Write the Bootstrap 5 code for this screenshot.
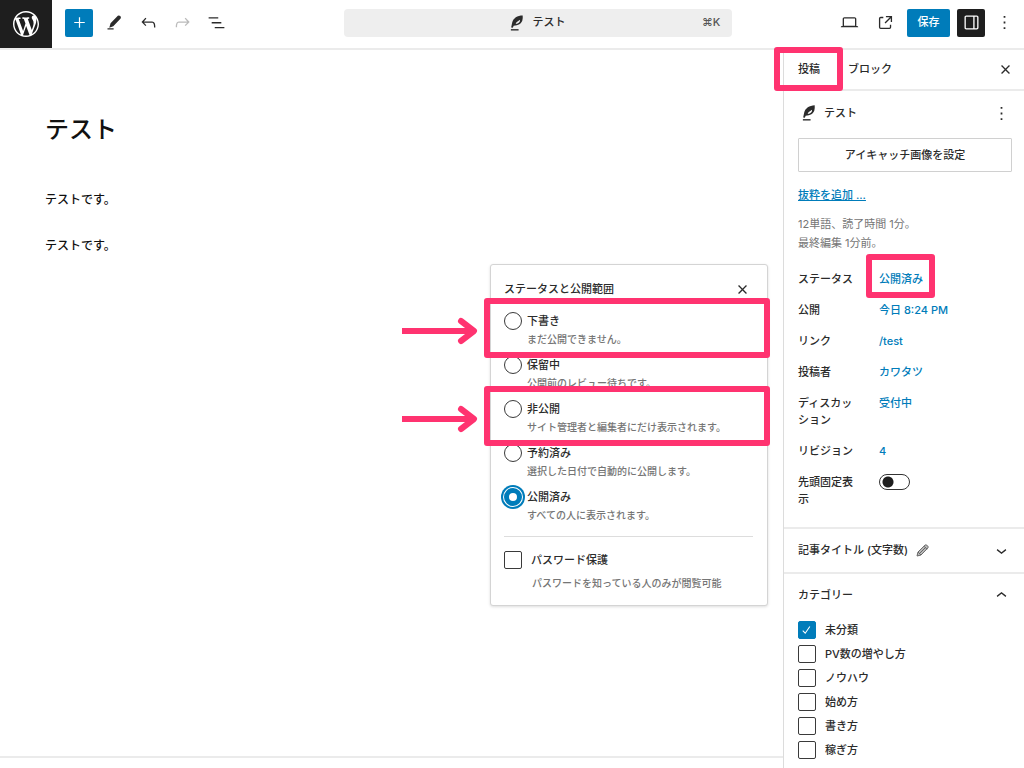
<!DOCTYPE html>
<html lang="ja">
<head>
<meta charset="utf-8">
<meta name="viewport" content="width=device-width, initial-scale=1">
<title>テスト</title>
<link href="https://cdn.jsdelivr.net/npm/bootstrap@5.3.0/dist/css/bootstrap.min.css" rel="stylesheet">
<style>
:root { --ink: #2b2b2b; --blue: #007cba; --line: #ebebeb; --pink: #ff3370; --gray: #757575; }
body { font: 500 11px/17px Inter, "Noto Sans CJK JP", sans-serif; color: var(--ink); background: #fff; }
button, input, label { font: inherit; color: inherit; }
svg { display: block; fill: currentColor; }
.ico { width: 21px; height: 21px; flex: none; }
.plain { border: 0; background: none; padding: 0; display: flex; align-items: center; justify-content: center; }
a, .linky { color: var(--blue); }
.linky { text-decoration: none; }

.topbar { height: 50px; border-bottom: 2px solid var(--line); }
.wp-logo { width: 52px; height: 48px; background: #1e1e1e; color: #fff; flex: none; }
.tools { display: grid; grid-template-columns: 1fr 40% 1fr; align-items: center; height: 45px; }
.sq { width: 28px; height: 28px; border-radius: 2px; }
.blue-btn { background: var(--blue); color: #fff; border-radius: 2px; height: 28px; }
.save { width: 43px; }
.dark-btn { background: #1e1e1e; color: #fff; }
.left-tools { padding-left: 13px; }
.tool { width: 34px; }
.redo { color: #bbb; }
.right-tools { gap: 7px; padding-right: 7px; }
.more { width: 25px; }
.search { height: 28px; background: #eee; border-radius: 4px; }
.search .kbd-hint { position: absolute; right: 12px; color: #555; }

.canvas { color: #111; }
.doc { padding: 58px 45px; }
.doc h1 { font: 500 24px/44px Inter, "Noto Sans CJK JP", sans-serif; margin: 0 0 38px; }
.doc p { font-size: 12px; line-height: 20px; margin: 0 0 26px; }
.foot { height: 12px; border-top: 2px solid var(--line); }

.side { width: 241px; border-left: 1px solid #dcdcdc; flex: none; }
.tabs { height: 41px; border-bottom: 2px solid var(--line); padding: 0 8px 0 14px; }
.tabs .plain { height: 39px; }
.summary { padding: 10px 12px 19px 14px; }
.summary .head { height: 24px; margin-bottom: 13px; }
.thumb-btn { height: 34px; border: 1px solid #d0d0d0; border-radius: 1px; background: #fff; margin-bottom: 15px; }
.meta { color: var(--gray); line-height: 19px; font-weight: 400; margin: 11px 0 18px; }
.rows { display: grid; gap: 14px; margin: 0; }
.rows dt, .rows dd { font-weight: inherit; margin: 0; }
.rows dt { width: 60px; }
.pair { display: flex; gap: 21px; }
.panel-head { height: 45px; border-top: 2px solid var(--line); padding: 0 12px 0 14px; width: 100%; }
.cats { padding: 4px 14px 7px; gap: 6px; }
.tick-row { display: flex; gap: 9px; }
.tick-row label { line-height: 18px; }

input.tick, input.dot { appearance: none; width: 18px; height: 18px; border: 1px solid #3a3a3a; background: #fff; margin: 0; flex: none; }
input.tick { border-radius: 2px; }
input.dot { border-radius: 50%; }
input.tick:checked { border-color: var(--blue); background: var(--blue) url("data:image/svg+xml,%3Csvg xmlns='http://www.w3.org/2000/svg' viewBox='0 0 18 18'%3E%3Cpath d='M4.2 9.8l2.8 2.8 5.200-7.600' fill='none' stroke='white' stroke-width='1.200'/%3E%3C/svg%3E"); }
input.dot:checked { border: 5px solid var(--blue); box-shadow: 0 0 0 1px #fff, 0 0 0 3px var(--blue); }
input.switch { appearance: none; display: block; width: 31px; height: 16px; margin: 0; border: 1px solid #333; border-radius: 8px; background: radial-gradient(circle at 8px 7px, #1e1e1e 5px, #fff 6px); }

.pop { position: absolute; top: 214px; right: 256px; width: 278px; border: 1px solid #d4d4d4; border-radius: 3px; background: #fff; box-shadow: 0 1px 3px #0002; padding: 13px 14px 13px 13px; }
.pop .head { height: 22px; margin-bottom: 12px; }
.pop h2 { font: inherit; margin: 0; }
.opts { display: grid; gap: 8px; }
.opt { position: relative; display: flex; gap: 5px; }
.opt label, .hint { line-height: 18px; display: block; }
.hint { color: var(--gray); font-size: 10px; }
.pw { border-top: 1px solid #ddd; margin-top: 12px; padding-top: 14px; }
.pw .hint { margin: 5px 0 0 28px; }

/* Pink emphasis frames laid over the controls */
.frame { position: absolute; border: 6px solid var(--pink); border-radius: 3px; z-index: 2; pointer-events: none; }
.opt .frame { inset: -14px -17px -10px -20px; }
.tab-frame { inset: -3px -23px -2px -24px; }
.status-frame { inset: -17px -12px -10px -13px; }
.arrow { position: absolute; right: 100%; top: 50%; width: 82px; height: 32px; margin: -13px 8px 0 0; fill: none; stroke: var(--pink); stroke-width: 6; }
</style>
</head>
<body>
<svg width="0" height="0" class="position-absolute" aria-hidden="true">
  <symbol id="feather" viewBox="0 0 16 20"><path d="M14.500 1C8.500 1.300 3.600 4.400 2.600 9.200l-1.300 6 1.900.3 1-2.500c5.200 0 8.900-2.200 9.900-5.800.5-2 .6-4.200.4-6.200zM11.500 6.300c.4 2.300-1.600 4.300-5 4.800 0-1.900 2.900-3 5-4.800z" fill-rule="evenodd"/><path d="M1 17h8.800v1.600H1z"/></symbol>
  <symbol id="dots" viewBox="0 0 24 24"><path d="M13 19.500h-2v-2.200h2zm0-6.400h-2v-2.200h2zm0-6.400h-2V4.500h2z"/></symbol>
  <symbol id="cross" viewBox="0 0 24 24"><path d="M12 13.060l4 4 1.060-1.060-4-4 4-4L16 6.940l-4 4-4-4L6.940 8l4 4-4 4L8 17.060z"/></symbol>
</svg>
<div class="d-flex flex-column min-vh-100">
<header class="topbar d-flex">
  <a href="#" class="wp-logo d-flex align-items-center justify-content-center" aria-label="WordPress"><svg width="26" height="26" viewBox="0 0 20 20"><path d="M20 10c0-5.510-4.490-10-10-10C4.480 0 0 4.490 0 10c0 5.520 4.480 10 10 10 5.510 0 10-4.480 10-10zM7.780 15.370L4.370 6.220c.55-.02 1.170-.08 1.170-.08.5-.06.44-1.130-.06-1.110 0 0-1.450.11-2.370.11-.18 0-.37 0-.58-.01C4.120 2.690 6.870 1.110 10 1.110c2.330 0 4.450.87 6.050 2.340-.68-.11-1.650.39-1.650 1.580 0 .74.45 1.360.9 2.100.35.61.55 1.360.55 2.460 0 1.490-1.400 5-1.400 5l-3.030-8.370c.54-.02.82-.17.82-.17.5-.05.44-1.250-.06-1.220 0 0-1.440.12-2.380.12-.87 0-2.330-.12-2.330-.12-.5-.03-.56 1.200-.06 1.220l.92.08 1.260 3.410zM17.410 10c.24-.64.74-1.870.43-4.250.7 1.290 1.050 2.710 1.050 4.250 0 3.290-1.730 6.240-4.400 7.780.97-2.590 1.940-5.200 2.920-7.780zM6.100 18.090C3.120 16.650 1.110 13.530 1.110 10c0-1.300.23-2.480.72-3.590C3.250 10.300 4.670 14.200 6.100 18.090zm4.030-6.630l2.580 6.980c-.86.29-1.760.45-2.710.45-.79 0-1.570-.11-2.290-.33.81-2.380 1.620-4.740 2.420-7.100z"/></svg></a>
  <div class="tools flex-grow-1">
    <div class="left-tools d-flex align-items-center">
      <button class="plain blue-btn sq me-1" aria-label="追加"><svg class="ico" viewBox="0 0 24 24"><path d="M11.300 12.700V18h1.400v-5.300H18v-1.400h-5.300V6h-1.400v5.300H6v1.400z"/></svg></button>
      <button class="plain tool" aria-label="ツール"><svg class="ico" viewBox="0 0 24 24"><path d="M15.800 4.300q1.500-.9 2.800.4t.4 2.800l-8.400 8.700-4.600 1.700 1.500-5zM4 18.500h7V20H4z"/></svg></button>
      <button class="plain tool" aria-label="元に戻す"><svg class="ico" viewBox="0 0 24 24"><path d="M18.300 11.700c-.6-.6-1.400-.9-2.300-.9H6.700l2.900-3.300-1.100-1-4.500 5L8.500 16l1-1-2.700-2.700H16c.5 0 .9.2 1.300.5 1 1 1 3.400 1 4.500v.3h1.500v-.2c0-1.500 0-4.300-1.500-5.700z"/></svg></button>
      <button class="plain tool redo" aria-label="やり直す"><svg class="ico" viewBox="0 0 24 24"><path d="M15.600 6.500l-1.100 1 2.900 3.300H8c-.9 0-1.700.3-2.300.9-1.400 1.500-1.400 4.200-1.400 5.600v.2h1.500v-.3c0-1.100 0-3.500 1-4.500.3-.3.7-.5 1.300-.5h9.200L14.500 15l1.100 1.100 4.600-4.600-4.600-5z"/></svg></button>
      <button class="plain tool" aria-label="リスト表示"><svg class="ico" viewBox="0 0 24 24"><path d="M3 6h11v1.500H3zm3.500 5.500h11V13h-11zM21 17H10v1.500h11z"/></svg></button>
    </div>
    <button class="plain search position-relative w-100"><svg class="me-2" width="14" height="18"><use href="#feather"/></svg><span>テスト</span><span class="kbd-hint">⌘K</span></button>
    <div class="right-tools d-flex align-items-center justify-content-end">
      <button class="plain me-2" aria-label="表示"><svg class="ico" viewBox="0 0 24 24"><path d="M20.500 16h-.7V8c0-1.100-.9-2-2-2H6.200c-1.100 0-2 .9-2 2v8h-.7c-.8 0-1.500.7-1.500 1.500h20c0-.8-.7-1.500-1.500-1.500zM5.700 8c0-.3.2-.5.5-.5h11.600c.3 0 .5.2.5.5v7.600H5.700z"/></svg></button>
      <button class="plain me-1" aria-label="投稿を表示"><svg class="ico" viewBox="0 0 24 24"><path d="M19.500 4.500h-7V6h4.440l-5.970 5.970 1.060 1.060L18 7.060v4.440h1.500zm-13 1a2 2 0 0 0-2 2v10a2 2 0 0 0 2 2h10a2 2 0 0 0 2-2v-3H17v3a.5.5 0 0 1-.5.5h-10a.5.5 0 0 1-.5-.5v-10a.5.5 0 0 1 .5-.5h3V5.500z"/></svg></button>
      <button class="plain blue-btn save">保存</button>
      <button class="plain dark-btn sq" aria-label="設定"><svg class="ico" viewBox="0 0 24 24"><path fill-rule="evenodd" d="M18 4H6c-1.100 0-2 .9-2 2v12c0 1.100.9 2 2 2h12c1.100 0 2-.9 2-2V6c0-1.100-.9-2-2-2zm-4 14.500H6c-.3 0-.5-.2-.5-.5V6c0-.3.2-.5.5-.5h8zm4.500-.5c0 .3-.2.5-.5.5h-2.500v-13H18c.3 0 .5.2.5.5z"/></svg></button>
      <button class="plain more" aria-label="オプション"><svg class="ico"><use href="#dots"/></svg></button>
    </div>
  </div>
</header>

<div class="d-flex flex-grow-1 position-relative">
  <main class="canvas flex-grow-1 d-flex flex-column">
    <article class="doc flex-grow-1">
      <h1>テスト</h1>
      <p>テストです。</p>
      <p>テストです。</p>
    </article>
    <div class="foot"></div>
  </main>

  <aside class="side">
    <div class="tabs d-flex align-items-center">
      <button class="plain position-relative">投稿<span class="frame tab-frame"></span></button>
      <button class="plain ms-4 ps-1">ブロック</button>
      <button class="plain ms-auto" aria-label="閉じる"><svg class="ico"><use href="#cross"/></svg></button>
    </div>
    <section class="summary">
      <div class="head d-flex align-items-center">
        <svg class="ms-1 me-2" width="14" height="18"><use href="#feather"/></svg><span>テスト</span>
        <button class="plain ms-auto" aria-label="操作"><svg class="ico"><use href="#dots"/></svg></button>
      </div>
      <button class="plain thumb-btn w-100">アイキャッチ画像を設定</button>
      <a href="#">抜粋を追加 ...</a>
      <p class="meta">12単語、読了時間 1分。<br>最終編集 1分前。</p>
      <dl class="rows">
        <div class="pair"><dt>ステータス</dt><dd class="position-relative"><a class="linky" href="#">公開済み</a><span class="frame status-frame"></span></dd></div>
        <div class="pair"><dt>公開</dt><dd><a class="linky" href="#">今日 8:24 PM</a></dd></div>
        <div class="pair"><dt>リンク</dt><dd><a class="linky" href="#">/test</a></dd></div>
        <div class="pair"><dt>投稿者</dt><dd><a class="linky" href="#">カワタツ</a></dd></div>
        <div class="pair"><dt>ディスカッション</dt><dd><a class="linky" href="#">受付中</a></dd></div>
        <div class="pair"><dt>リビジョン</dt><dd><a class="linky" href="#">4</a></dd></div>
        <div class="pair"><dt><label for="sticky">先頭固定表示</label></dt><dd><input id="sticky" class="switch" type="checkbox" role="switch"></dd></div>
      </dl>
    </section>
    <button class="plain panel-head justify-content-start"><span>記事タイトル (文字数)</span>
      <svg class="ms-2" width="13" height="13" viewBox="0 0 13 13"><path d="M1 12l1-4L9 1.200q.9-.8 1.800 0l1 1q.8.900 0 1.800L5 11z" fill="#bbb" stroke="#666"/><path d="M2 8l3 3M8 2.200l3 3M3.500 9.500l6-6" stroke="#666" fill="none"/></svg>
      <svg class="ico ms-auto" viewBox="0 0 24 24"><path d="M17.500 11.600L12 16l-5.500-4.400.9-1.200L12 14l4.600-3.600z"/></svg></button>
    <button class="plain panel-head justify-content-start"><span>カテゴリー</span>
      <svg class="ico ms-auto" viewBox="0 0 24 24"><path d="M6.500 12.400L12 8l5.500 4.400-.9 1.200L12 10l-4.600 3.600z"/></svg></button>
    <div class="cats d-grid">
      <div class="tick-row"><input class="tick" type="checkbox" id="c1" checked><label for="c1">未分類</label></div>
      <div class="tick-row"><input class="tick" type="checkbox" id="c2"><label for="c2">PV数の増やし方</label></div>
      <div class="tick-row"><input class="tick" type="checkbox" id="c3"><label for="c3">ノウハウ</label></div>
      <div class="tick-row"><input class="tick" type="checkbox" id="c4"><label for="c4">始め方</label></div>
      <div class="tick-row"><input class="tick" type="checkbox" id="c5"><label for="c5">書き方</label></div>
      <div class="tick-row"><input class="tick" type="checkbox" id="c6"><label for="c6">稼ぎ方</label></div>
    </div>
  </aside>

  <div class="pop" role="dialog" aria-labelledby="pop-title">
    <div class="head d-flex align-items-center justify-content-between">
      <h2 id="pop-title">ステータスと公開範囲</h2>
      <button class="plain" aria-label="閉じる"><svg class="ico"><use href="#cross"/></svg></button>
    </div>
    <div class="opts">
      <div class="opt"><input class="dot" type="radio" name="status" id="s1"><div><label for="s1">下書き</label><span class="hint">まだ公開できません。</span></div>
        <span class="frame"><svg class="arrow" viewBox="0 0 82 32"><path d="M2 16h68"/><path d="M61 6l13 10-13 10" stroke-linecap="round" stroke-linejoin="round"/></svg></span></div>
      <div class="opt"><input class="dot" type="radio" name="status" id="s2"><div><label for="s2">保留中</label><span class="hint">公開前のレビュー待ちです。</span></div></div>
      <div class="opt"><input class="dot" type="radio" name="status" id="s3"><div><label for="s3">非公開</label><span class="hint">サイト管理者と編集者にだけ表示されます。</span></div>
        <span class="frame"><svg class="arrow" viewBox="0 0 82 32"><path d="M2 16h68"/><path d="M61 6l13 10-13 10" stroke-linecap="round" stroke-linejoin="round"/></svg></span></div>
      <div class="opt"><input class="dot" type="radio" name="status" id="s4"><div><label for="s4">予約済み</label><span class="hint">選択した日付で自動的に公開します。</span></div></div>
      <div class="opt"><input class="dot" type="radio" name="status" id="s5" checked><div><label for="s5">公開済み</label><span class="hint">すべての人に表示されます。</span></div></div>
    </div>
    <div class="pw">
      <div class="tick-row"><input class="tick" type="checkbox" id="pw"><label for="pw">パスワード保護</label></div>
      <span class="hint">パスワードを知っている人のみが閲覧可能</span>
    </div>
  </div>
</div>
</div>
<script src="https://cdn.jsdelivr.net/npm/bootstrap@5.3.0/dist/js/bootstrap.bundle.min.js"></script>
</body>
</html>
